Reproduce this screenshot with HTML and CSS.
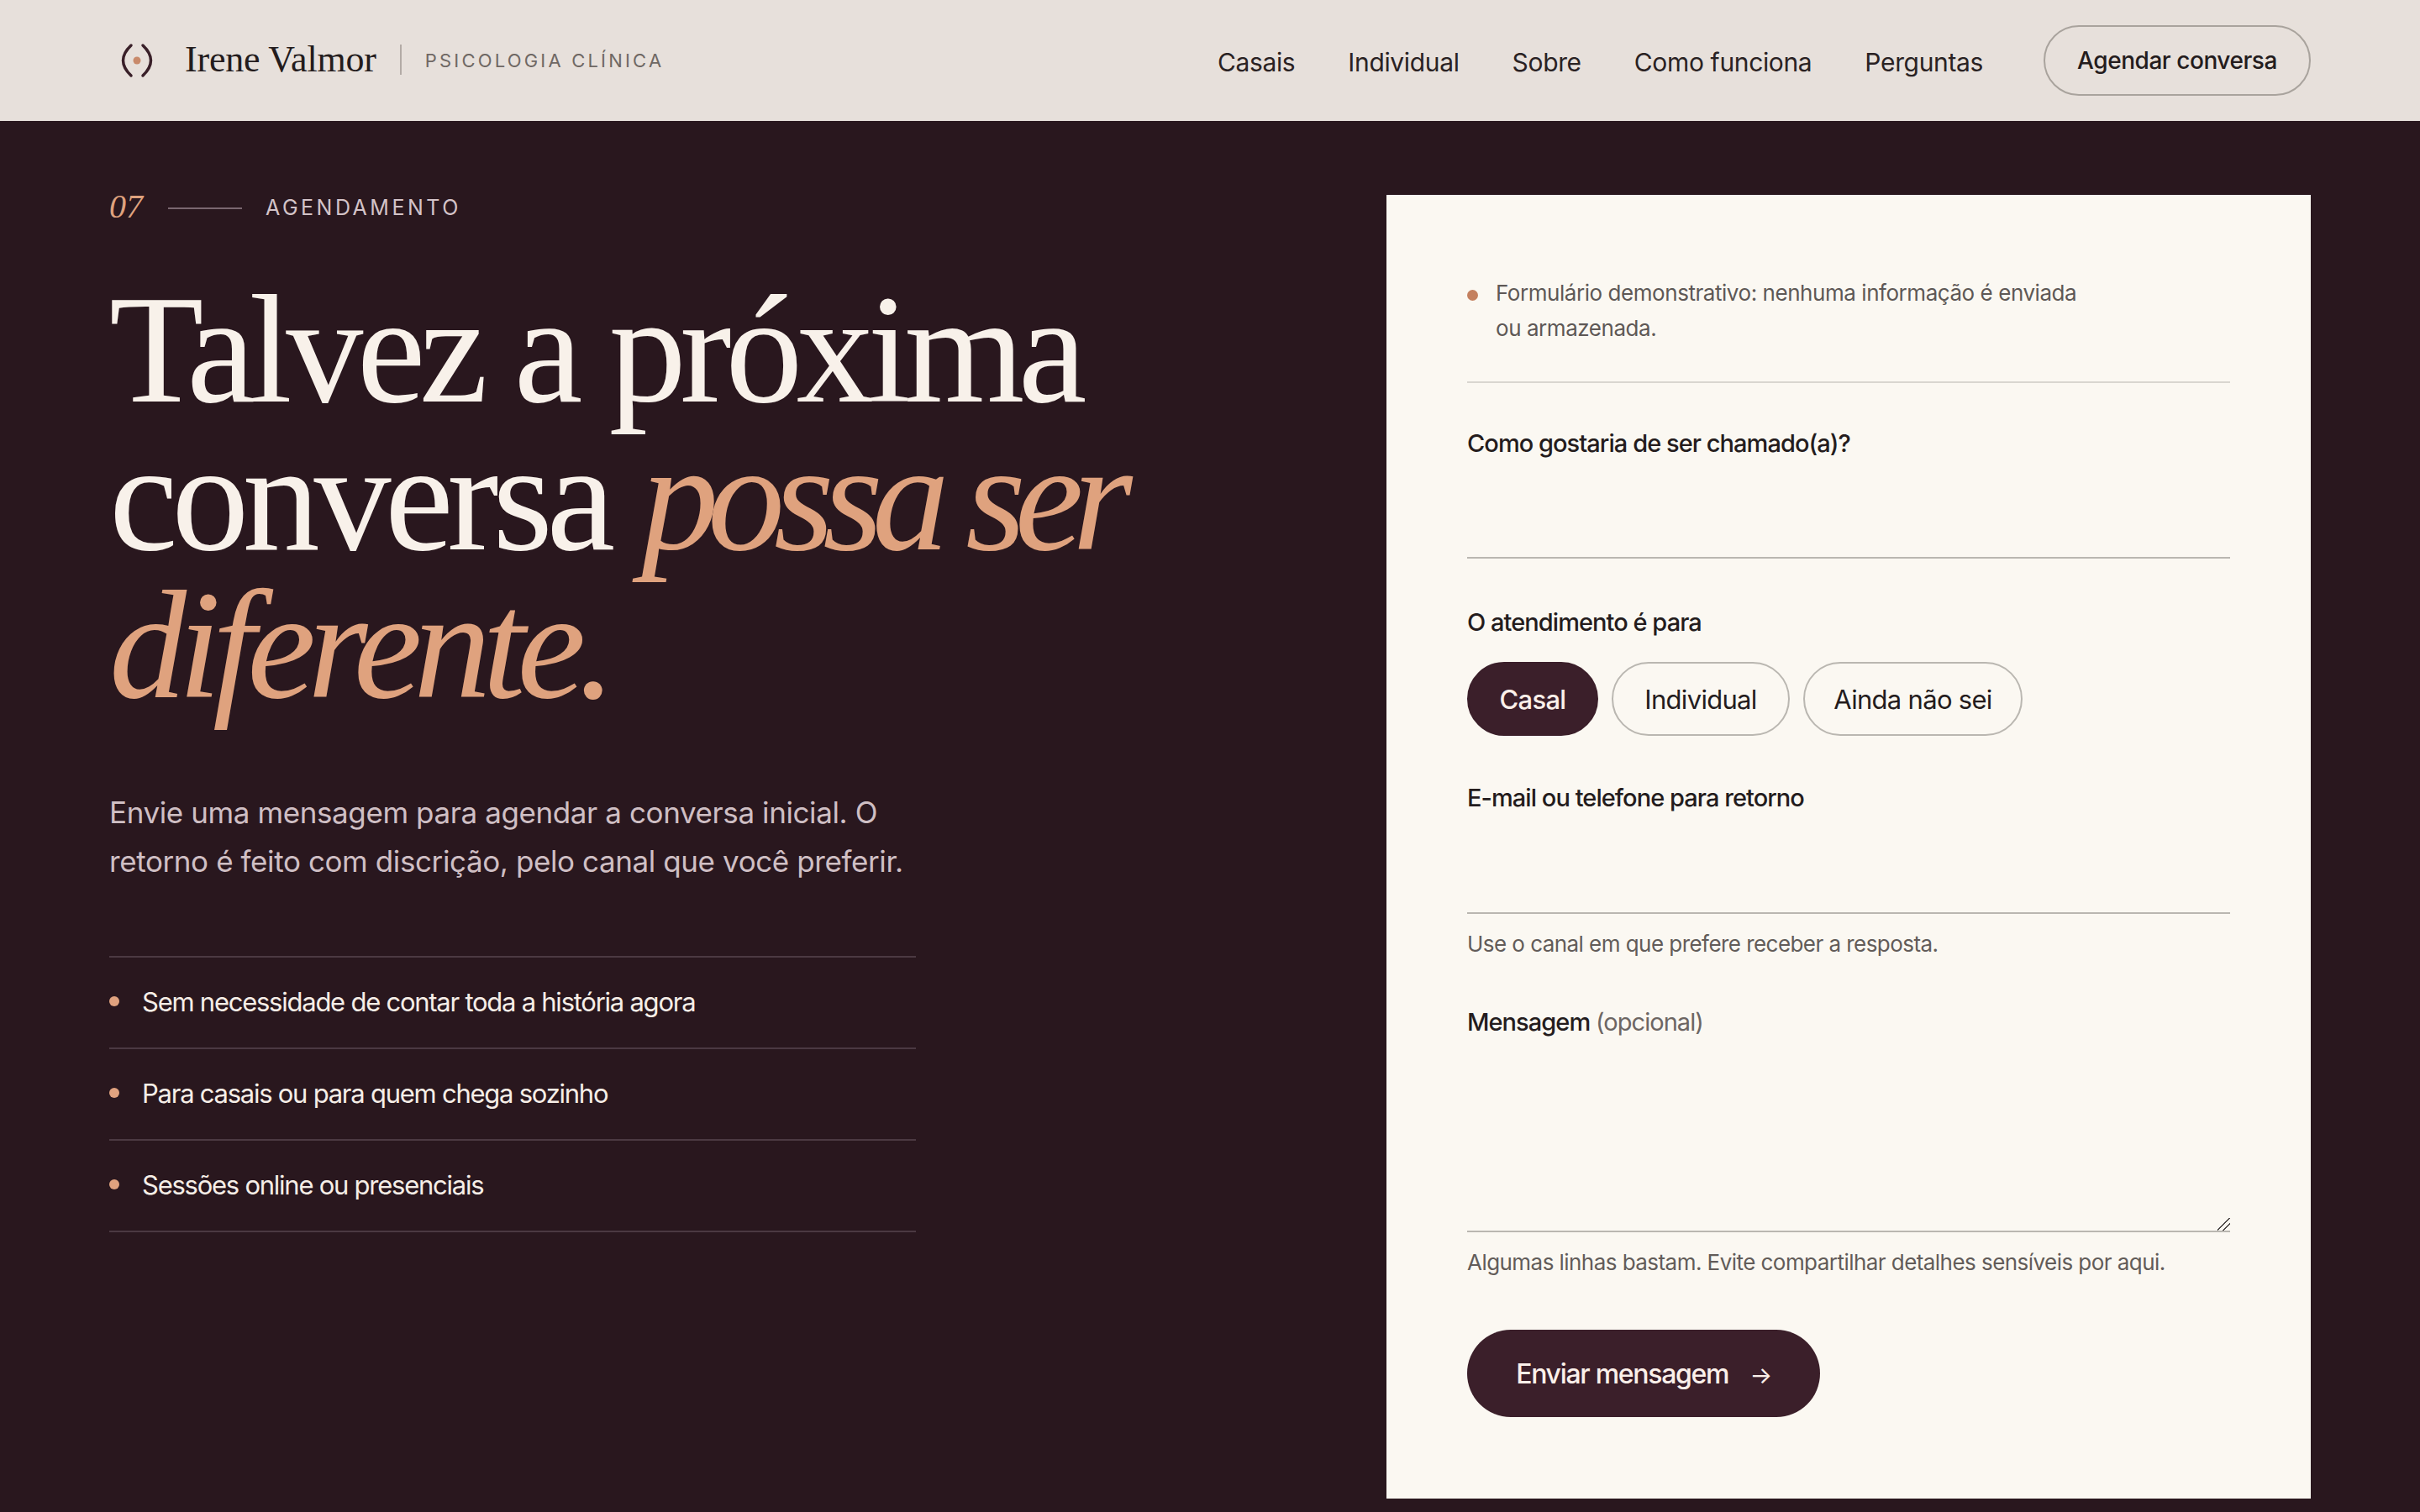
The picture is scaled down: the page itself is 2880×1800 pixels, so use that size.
FILE: index.html
```html
<!DOCTYPE html>
<html lang="pt-BR">
<head>
<meta charset="utf-8">
<title>Irene Valmor — Psicologia Clínica</title>
<link rel="stylesheet" href="styles.css">
</head>
<body>
<header class="topbar">
  <a class="brand" href="#">
    <svg class="brand-mark" viewBox="0 0 66 48" width="66" height="48" aria-hidden="true">
      <path d="M26 6Q7 24 26 42M40 6Q59 24 40 42" fill="none" stroke="#3a2029" stroke-width="3.5" stroke-linecap="round"/>
      <circle cx="33" cy="24" r="4.5" fill="#c98a6b"/>
    </svg>
    <span class="brand-name">Irene Valmor</span>
    <span class="brand-role">Psicologia Clínica</span>
  </a>
  <nav class="nav">
    <a href="#">Casais</a>
    <a href="#">Individual</a>
    <a href="#">Sobre</a>
    <a href="#">Como funciona</a>
    <a href="#">Perguntas</a>
  </nav>
  <a class="nav-cta" href="#">Agendar conversa</a>
</header>
<main class="booking">
  <section class="intro">
    <div class="eyebrow"><span class="eyebrow-num">07</span><span class="eyebrow-line"></span><span class="eyebrow-text">Agendamento</span></div>
    <h1 class="title">Talvez a próxima conversa <em>possa ser <span class="title-end">diferente.</span></em></h1>
    <p class="lead">Envie uma mensagem para agendar a conversa inicial. O retorno é feito com discrição, pelo canal que você preferir.</p>
    <ul class="points">
      <li>Sem necessidade de contar toda a história agora</li>
      <li>Para casais ou para quem chega sozinho</li>
      <li>Sessões online ou presenciais</li>
    </ul>
  </section>
  <form class="card">
    <p class="notice">Formulário demonstrativo: nenhuma informação é enviada<br>ou armazenada.</p>
    <label class="field field-name">
      <span class="label">Como gostaria de ser chamado(a)?</span>
      <input class="line-input" type="text">
    </label>
    <div class="field field-for">
      <span class="label">O atendimento é para</span>
      <div class="chips">
        <button class="chip chip-on" type="button">Casal</button>
        <button class="chip" type="button">Individual</button>
        <button class="chip" type="button">Ainda não sei</button>
      </div>
    </div>
    <label class="field field-contact">
      <span class="label">E-mail ou telefone para retorno</span>
      <input class="line-input" type="text">
      <span class="help">Use o canal em que prefere receber a resposta.</span>
    </label>
    <label class="field field-msg">
      <span class="label">Mensagem <span class="optional">(opcional)</span></span>
      <textarea class="line-input area"></textarea>
      <span class="help">Algumas linhas bastam. Evite compartilhar detalhes sensíveis por aqui.</span>
    </label>
    <button class="send" type="button">Enviar mensagem <span class="send-arrow">→</span></button>
  </form>
</main>
</body>
</html>
```
FILE: styles.css
```css
* { box-sizing: border-box; }
html, body { margin: 0; padding: 0; }
body {
  height: 1800px;
  overflow: hidden;
  background: #29171e;
  font-family: Inter, "Liberation Sans", sans-serif;
  color: #211a1c;
}
a { color: inherit; text-decoration: none; }

.topbar {
  height: 144px;
  background: #e7e0db;
  padding: 0 130px;
  display: flex;
  align-items: center;
}
.brand { display: flex; align-items: center; margin-right: auto; }
.brand-mark { margin-right: 24px; }
.brand-name {
  font-family: "Liberation Serif", serif;
  font-size: 44px;
  letter-spacing: -0.2px;
  color: #241c1d;
  padding-right: 28px;
  border-right: 2px solid #b3aba6;
  line-height: 36px;
  position: relative;
  top: -1px;
}
.brand-role {
  margin-left: 28px;
  font-size: 22px;
  letter-spacing: 3.2px;
  text-transform: uppercase;
  color: #6f6864;
}
.nav { display: flex; gap: 63px; font-size: 30px; letter-spacing: -0.35px; color: #2a2223; margin-right: 72px; }
.nav a { position: relative; top: 2px; }
.nav-cta {
  width: 318px;
  height: 84px;
  border: 2px solid #a9a39d;
  border-radius: 42px;
  display: flex;
  align-items: center;
  justify-content: center;
  font-size: 28px;
  font-weight: 500;
  letter-spacing: -0.45px;
  color: #241c1d;
}

.booking {
  display: grid;
  grid-template-columns: 1fr 1100px;
  padding: 88px 130px 0;
}
.intro { min-width: 0; }
.eyebrow { display: flex; align-items: center; height: 30px; }
.eyebrow-num {
  font-family: "Liberation Serif", serif;
  font-style: italic;
  font-size: 40px;
  color: #dfa27e;
  width: 70px;
  position: relative;
  top: -2px;
}
.eyebrow-line { width: 88px; height: 2px; background: #7a6770; margin-right: 28px; position: relative; top: 1px; }
.eyebrow-text {
  font-size: 25px;
  letter-spacing: 3.5px;
  text-transform: uppercase;
  color: #d3c3c8;
}
.title {
  margin: 66px 0 0;
  width: 1300px;
  font-family: "Liberation Serif", serif;
  font-weight: 400;
  font-size: 184px;
  line-height: 176px;
  letter-spacing: -7.4px;
  color: #f8f1ea;
}
.title em { color: #dfa27e; font-style: italic; letter-spacing: -13.2px; }
.title .title-end { letter-spacing: -10px; }
.lead {
  margin: 82px 0 0;
  width: 960px;
  font-size: 35px;
  line-height: 58px;
  letter-spacing: -0.4px;
  color: #cfbfc4;
}
.points {
  list-style: none;
  margin: 84px 0 0;
  padding: 0;
  width: 960px;
  border-top: 2px solid #4b3942;
  font-size: 31px;
  letter-spacing: -1.25px;
  color: #f6eee7;
}
.points li {
  height: 109px;
  padding-bottom: 3px;
  border-bottom: 2px solid #4b3942;
  display: flex;
  align-items: center;
  gap: 27px;
}
.points li::before {
  content: "";
  width: 12px;
  height: 12px;
  border-radius: 50%;
  background: #e0a27f;
}

.card {
  height: 1552px;
  background: #fbf8f2;
  padding: 96px 96px 0;
  display: flex;
  flex-direction: column;
  align-items: stretch;
}
.notice {
  margin: 0;
  padding: 0 120px 42px 34px;
  border-bottom: 2px solid #d9d6d0;
  font-size: 26px;
  line-height: 42px;
  letter-spacing: -0.45px;
  color: #5e5856;
  position: relative;
}
.notice::before {
  content: "";
  position: absolute;
  left: 0;
  top: 17px;
  width: 13px;
  height: 13px;
  border-radius: 50%;
  background: #c4805f;
}
.field { display: flex; flex-direction: column; }
.label {
  font-size: 29px;
  line-height: 36px;
  font-weight: 500;
  letter-spacing: -0.95px;
  color: #241c1d;
}
.optional { font-weight: 400; color: #6d6663; }
.line-input {
  display: block;
  width: 100%;
  border: 0;
  border-bottom: 2px solid #bab7b1;
  background: transparent;
  outline: 0;
  padding: 0;
  font: inherit;
}
.help {
  margin-top: 19px;
  font-size: 26px;
  line-height: 34px;
  letter-spacing: -0.55px;
  color: #625c59;
}
.field-name { margin-top: 54px; }
.field-name .line-input { height: 119px; }
.field-for { margin-top: 58px; }
.chips { display: flex; gap: 16px; margin-top: 29px; }
.chip {
  height: 88px;
  padding: 0;
  border: 2px solid #bab7b1;
  border-radius: 44px;
  background: transparent;
  font: inherit;
  font-size: 31px;
  letter-spacing: -0.7px;
  color: #241c1d;
  width: 212px;
}
.chip:nth-child(3) { width: 261px; }
.chip-on { width: 156px; background: #3b1f2a; border-color: #3b1f2a; color: #fbf0ea; font-weight: 500; }
.field-contact { margin-top: 56px; }
.field-contact .line-input { height: 120px; }
.field-msg { margin-top: 58px; }
.area { height: 232px; }
.area::-webkit-resizer {
  background: linear-gradient(135deg, transparent 0 44%, #4a4543 44% 51%, transparent 51% 68%, #4a4543 68% 75%, transparent 75%);
}
.send {
  width: 420px;
  height: 104px;
  margin-top: 63px;
  border: 0;
  border-radius: 52px;
  background: #3b1f2a;
  color: #fbf0ea;
  font: inherit;
  font-size: 32px;
  font-weight: 500;
  letter-spacing: -1.3px;
  padding: 0;
}
.send-arrow { margin-left: 18px; font-weight: 400; font-size: 28px; }
```
